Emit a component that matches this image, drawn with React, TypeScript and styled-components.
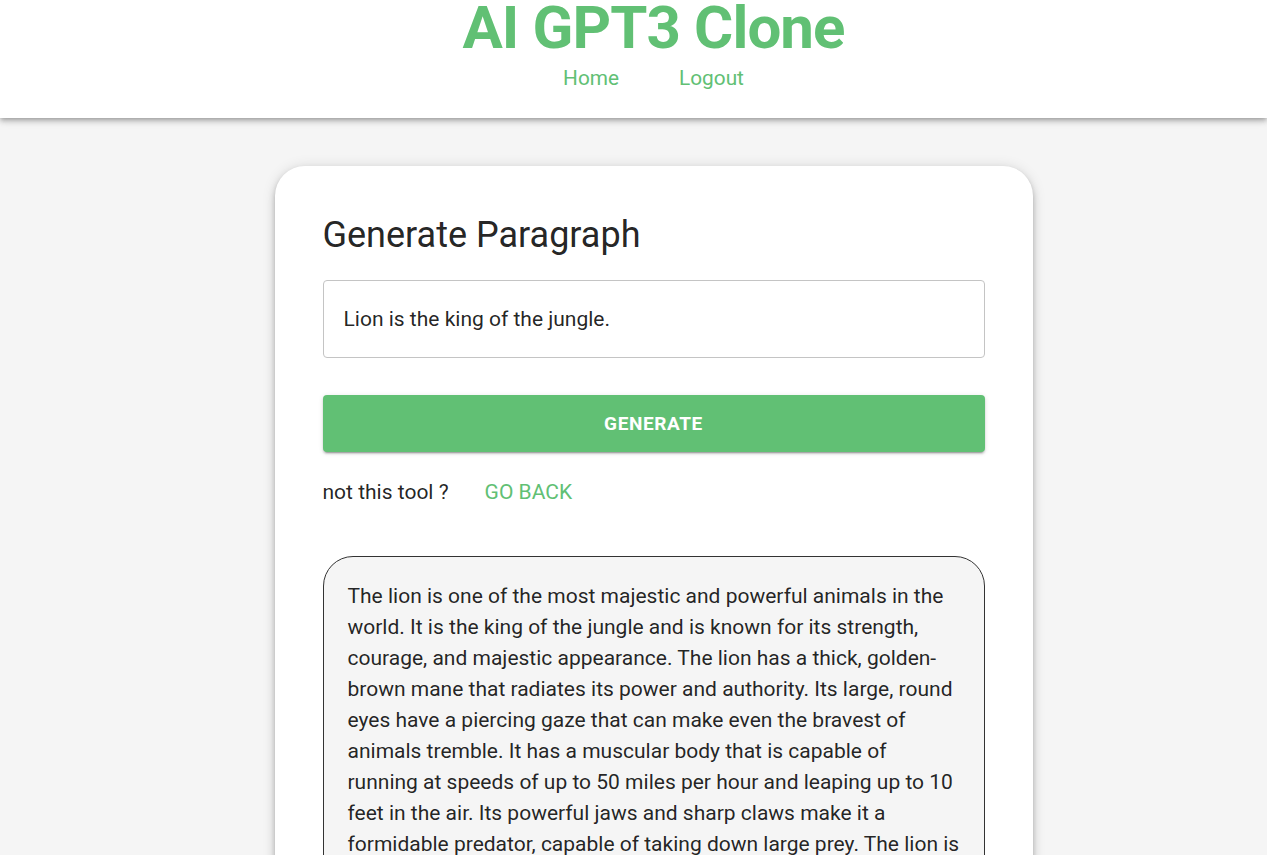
import React from "react";
import styled, { createGlobalStyle } from "styled-components";

const GREEN = "#61c074";

const Global = createGlobalStyle`
  html, body { margin: 0; padding: 0; }
  body {
    background: #f5f5f5;
    font-family: Roboto, "Liberation Sans", Arial, sans-serif;
    color: rgba(0,0,0,0.87);
    overflow: hidden;
  }
`;

const Header = styled.header`
  background: #fff;
  height: 118px;
  box-shadow: 0 2px 4px -1px rgba(0,0,0,0.2), 0 4px 5px 0 rgba(0,0,0,0.14), 0 1px 10px 0 rgba(0,0,0,0.12);
  display: flex;
  flex-direction: column;
  align-items: center;
  padding-left: 40px;
  box-sizing: border-box;
  position: relative;
  z-index: 1;
`;

const Title = styled.h1`
  margin: 0;
  font-size: 60px;
  font-weight: 700;
  line-height: 55px;
  color: ${GREEN};
  letter-spacing: -0.9px;
`;

const Nav = styled.nav`
  display: flex;
  gap: 60px;
  margin-top: 11px;
`;

const NavLink = styled.a`
  font-size: 20.8px;
  line-height: 24px;
  color: ${GREEN};
  text-decoration: none;
`;

const Main = styled.main`
  display: flex;
  justify-content: center;
  padding: 48px 0 0 40px;
`;

const Card = styled.section`
  width: 758px;
  box-sizing: border-box;
  background: #fff;
  border-radius: 30px;
  padding: 48px 48px 48px;
  box-shadow: 0 3px 5px -1px rgba(0,0,0,0.2), 0 5px 8px 0 rgba(0,0,0,0.14), 0 1px 14px 0 rgba(0,0,0,0.12);
`;

const Heading = styled.h4`
  margin: 0 0 24px;
  font-size: 36px;
  font-weight: 400;
  line-height: 42px;
  color: rgba(0,0,0,0.87);
`;

const Input = styled.input`
  display: block;
  width: 100%;
  box-sizing: border-box;
  height: 78px;
  border: 1px solid #c4c4c4;
  border-radius: 4px;
  padding: 0 20px;
  font-family: inherit;
  font-size: 21px;
  color: rgba(0,0,0,0.87);
  background: #fff;
  outline: none;
`;

const GenerateButton = styled.button`
  display: block;
  width: 100%;
  height: 57px;
  margin-top: 37px;
  border: none;
  border-radius: 4px;
  background: ${GREEN};
  color: #fff;
  font-family: inherit;
  font-size: 19px;
  font-weight: 700;
  letter-spacing: 0.6px;
  text-transform: uppercase;
  box-shadow: 0 3px 1px -2px rgba(0,0,0,0.2), 0 2px 2px 0 rgba(0,0,0,0.14), 0 1px 5px 0 rgba(0,0,0,0.12);
  cursor: pointer;
`;

const BackRow = styled.div`
  display: flex;
  align-items: center;
  gap: 36px;
  margin-top: 28px;
  font-size: 21px;
  line-height: 24px;
`;

const BackLink = styled.a`
  color: ${GREEN};
  text-decoration: none;
  text-transform: uppercase;
`;

const Result = styled.div`
  margin-top: 52px;
  border: 1px solid #333;
  border-radius: 30px;
  background: #f5f5f5;
  padding: 24px 24px;
  font-size: 21px;
  line-height: 31px;
  color: rgba(0,0,0,0.87);
`;

export default function App() {
  return (
    <>
      <Global />
      <Header>
        <Title>AI GPT3 Clone</Title>
        <Nav>
          <NavLink href="#">Home</NavLink>
          <NavLink href="#">Logout</NavLink>
        </Nav>
      </Header>
      <Main>
        <Card>
          <Heading>Generate Paragraph</Heading>
          <Input defaultValue="Lion is the king of the jungle." />
          <GenerateButton>Generate</GenerateButton>
          <BackRow>
            <span>not this tool ?</span>
            <BackLink href="#">Go Back</BackLink>
          </BackRow>
          <Result>
            The lion is one of the most majestic and powerful animals in the world. It is the king of the
            jungle and is known for its strength, courage, and majestic appearance. The lion has a thick,
            golden-brown mane that radiates its power and authority. Its large, round eyes have a piercing
            gaze that can make even the bravest of animals tremble. It has a muscular body that is capable
            of running at speeds of up to 50 miles per hour and leaping up to 10 feet in the air. Its
            powerful jaws and sharp claws make it a formidable predator, capable of taking down large prey.
            The lion is also a social animal, living in groups called prides that work together to hunt and
            protect their territory.
          </Result>
        </Card>
      </Main>
    </>
  );
}
